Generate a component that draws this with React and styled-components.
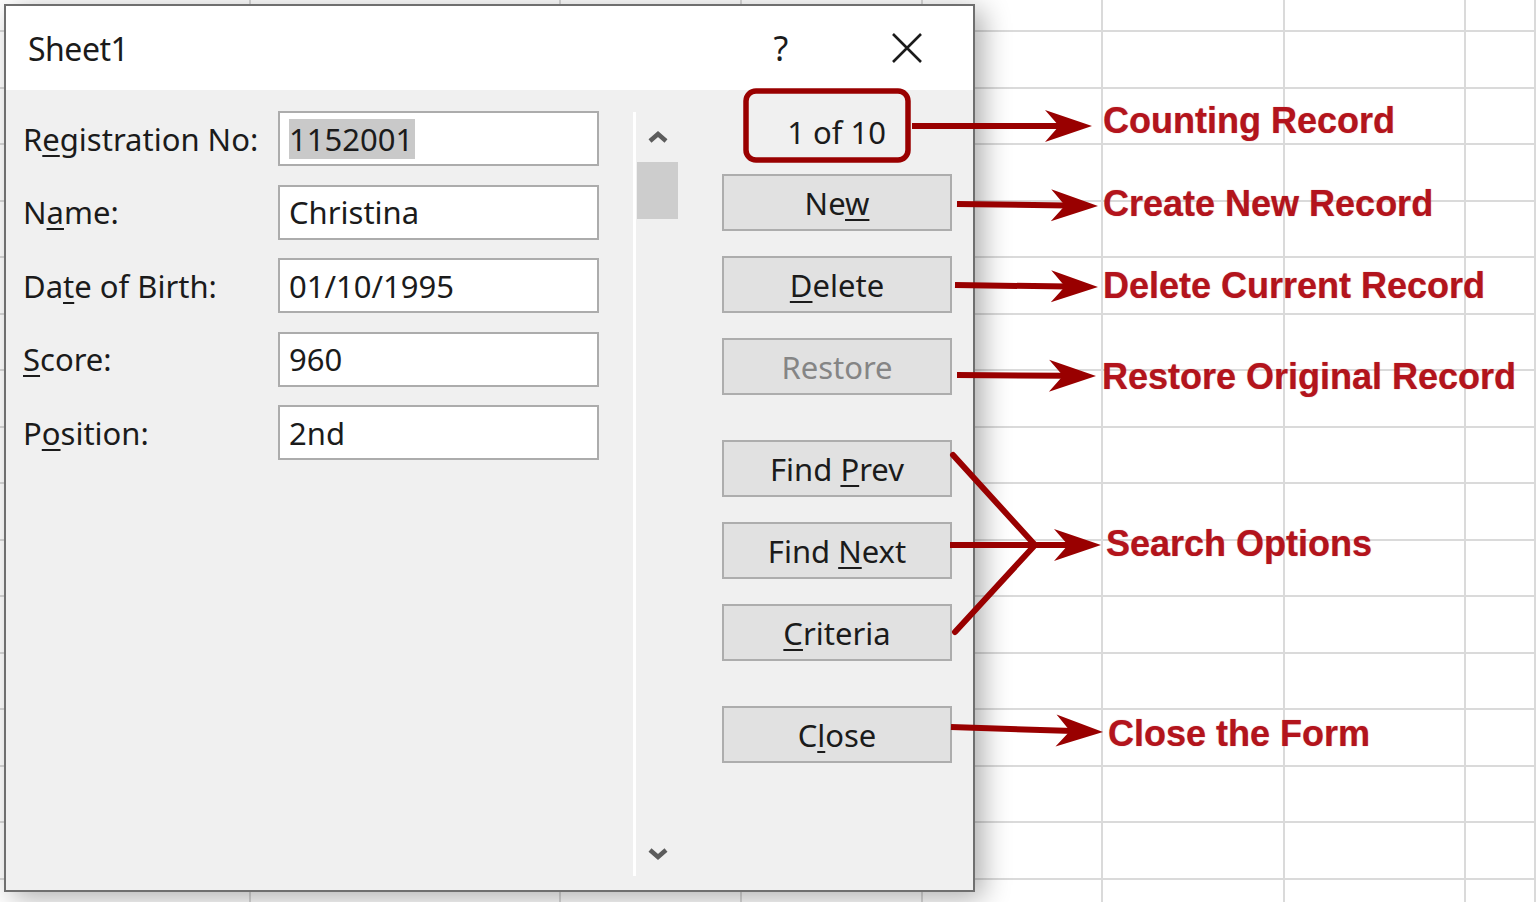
import React from 'react'
import styled, { createGlobalStyle } from 'styled-components'

const GlobalStyle = createGlobalStyle`
  html, body {
    margin: 0;
    padding: 0;
    background: #fff;
    overflow: hidden;
  }
`

const Page = styled.div`
  position: relative;
  width: 1536px;
  height: 902px;
  overflow: hidden;
  background: #fff;
  font-family: "Noto Sans", "Open Sans", sans-serif;
`

// spreadsheet behind the dialog
const Sheet = styled.div`
  display: grid;
  grid-template-columns: 251px 310px 181px 181px 180px 182px 181px 1fr;
  grid-template-rows: 32px repeat(16, 56.5px);
  width: 1536px;
  height: 902px;
`

const Cell = styled.div`
  border-right: 2px solid #dadada;
  border-bottom: 2px solid #dadada;
`

const Dialog = styled.div`
  position: absolute;
  left: 4px;
  top: 4px;
  width: 971px;
  height: 888px;
  box-sizing: border-box;
  border: 2px solid #6f6f6f;
  display: flex;
  flex-direction: column;
  background: #f0f0f0;
  box-shadow: 8px 6px 26px rgba(0, 0, 0, 0.32);
`

const TitleBar = styled.div`
  height: 84px;
  flex-shrink: 0;
  display: flex;
  align-items: center;
  background: #fff;
  padding: 0 36px 0 22px;
`

const Title = styled.div`
  flex: 1;
  font-size: 32px;
  color: #1b1b1b;
  letter-spacing: -0.5px;
`

const TitleButton = styled.div`
  width: 60px;
  height: 60px;
  display: flex;
  align-items: center;
  justify-content: center;
  font-size: 34px;
  color: #1b1b1b;
  margin-left: ${p => p.$gap || 0}px;
`

const Body = styled.div`
  flex: 1;
  display: flex;
`

const Fields = styled.div`
  display: grid;
  grid-template-columns: 255px 321px;
  grid-auto-rows: 55px;
  row-gap: 18.5px;
  align-content: start;
  padding: 21px 0 0 17px;
`

const Label = styled.div`
  display: flex;
  align-items: center;
  font-size: 31px;
  color: #1b1b1b;
  white-space: pre;
`

const AccessKey = styled.span`
  text-decoration: underline;
  text-decoration-thickness: 2px;
  text-underline-offset: 4px;
`

const TextBox = styled.div`
  box-sizing: border-box;
  border: 2px solid #acacac;
  background: #fff;
  display: flex;
  align-items: center;
  padding-left: 9px;
  font-size: 31px;
  color: #1b1b1b;
`

const Selected = styled.span`
  background: #c9c9c9;
  line-height: 40px;
  padding-right: 2px;
`

const ScrollBar = styled.div`
  margin: 22px 0 14px 34px;
  width: 43px;
  border-left: 3px solid #fff;
  display: flex;
  flex-direction: column;
`

const ScrollArrow = styled.div`
  height: ${p => p.$h}px;
  display: flex;
  align-items: center;
  justify-content: center;
`

const Thumb = styled.div`
  margin-left: 1px;
  width: 41px;
  height: 57px;
  background: #cdcdcd;
`

const Spacer = styled.div`
  flex: 1;
`

const Buttons = styled.div`
  margin-left: 43px;
  width: 230px;
  padding-top: 10px;
  display: flex;
  flex-direction: column;
`

const Counter = styled.div`
  height: 64px;
  margin-bottom: 10px;
  display: flex;
  align-items: center;
  justify-content: flex-end;
  padding-right: 66px;
  font-size: 31px;
  color: #1b1b1b;
`

const Button = styled.div`
  box-sizing: border-box;
  height: 57px;
  margin-top: ${p => (p.$first ? 0 : p.$spaced ? 45 : 25)}px;
  border: 2px solid #adadad;
  background: #e1e1e1;
  display: flex;
  align-items: center;
  justify-content: center;
  font-size: 31px;
  white-space: pre;
  color: ${p => (p.$disabled ? '#858585' : '#1b1b1b')};
`

const Overlay = styled.svg`
  position: absolute;
  left: 0;
  top: 0;
  pointer-events: none;
`

const Note = styled.div`
  position: absolute;
  font-family: "Liberation Sans", Arial, sans-serif;
  font-weight: 700;
  font-size: 36px;
  line-height: 36px;
  color: #b3141c;
  white-space: nowrap;
  text-shadow: 0 0 1px rgba(179, 20, 28, 0.6);
`

const fields = [
  { label: 'Registration No:', key: 1, value: '1152001', selected: true },
  { label: 'Name:', key: 1, value: 'Christina' },
  { label: 'Date of Birth:', key: 2, value: '01/10/1995' },
  { label: 'Score:', key: 0, value: '960' },
  { label: 'Position:', key: 1, value: '2nd' },
]

const buttons = [
  { text: 'New', key: 2 },
  { text: 'Delete', key: 0 },
  { text: 'Restore', key: -1, disabled: true },
  { text: 'Find Prev', key: 5, spaced: true },
  { text: 'Find Next', key: 5 },
  { text: 'Criteria', key: 0 },
  { text: 'Close', key: 1, spaced: true },
]

const arrows = [
  { x1: 912, y1: 126, x2: 1092, y2: 126 },
  { x1: 957, y1: 204, x2: 1098, y2: 206 },
  { x1: 955, y1: 285, x2: 1098, y2: 287 },
  { x1: 957, y1: 375, x2: 1096, y2: 376 },
  { x1: 950, y1: 545, x2: 1101, y2: 545 },
  { x1: 951, y1: 727, x2: 1103, y2: 732 },
]

const notes = [
  { text: 'Counting Record', x: 1103, y: 103 },
  { text: 'Create New Record', x: 1103, y: 186 },
  { text: 'Delete Current Record', x: 1103, y: 268 },
  { text: 'Restore Original Record', x: 1102, y: 359 },
  { text: 'Search Options', x: 1106, y: 526 },
  { text: 'Close the Form', x: 1108, y: 716 },
]

const withKey = (text, i) => {
  if (i < 0) return <span>{text}</span>
  return (
    <span>
      {text.slice(0, i)}
      <AccessKey>{text[i]}</AccessKey>
      {text.slice(i + 1)}
    </span>
  )
}

const Chevron = ({ down }) => (
  <svg width="22" height="14" viewBox="0 0 22 14">
    <polyline
      points={down ? '3,4 11,11 19,4' : '3,11 11,4 19,11'}
      fill="none"
      stroke="#5c5c5c"
      strokeWidth="4.5"
    />
  </svg>
)

const CloseIcon = () => (
  <svg width="30" height="30" viewBox="0 0 30 30">
    <path d="M1 1 L29 29 M29 1 L1 29" stroke="#1b1b1b" strokeWidth="2.6" />
  </svg>
)

const RED = '#990000'

const Arrow = ({ x1, y1, x2, y2 }) => {
  const deg = (Math.atan2(y2 - y1, x2 - x1) * 180) / Math.PI
  const len = Math.hypot(x2 - x1, y2 - y1)
  return (
    <g transform={`translate(${x1} ${y1}) rotate(${deg})`}>
      <line x1="0" y1="0" x2={len - 30} y2="0" stroke={RED} strokeWidth="6" />
      <polygon
        points={`${len},0 ${len - 47},-16 ${len - 33},0 ${len - 47},16`}
        fill={RED}
      />
    </g>
  )
}

const Annotations = () => (
  <>
    <Overlay width="1536" height="902" viewBox="0 0 1536 902">
      <rect x="746" y="91" width="162" height="69" rx="10" fill="none" stroke={RED} strokeWidth="5.5" />
      <line x1="953" y1="455" x2="1035" y2="545" stroke={RED} strokeWidth="6" strokeLinecap="round" />
      <line x1="955" y1="632" x2="1035" y2="545" stroke={RED} strokeWidth="6" strokeLinecap="round" />
      {arrows.map((a, i) => (
        <Arrow key={i} {...a} />
      ))}
    </Overlay>
    {notes.map(n => (
      <Note key={n.text} style={{ left: n.x, top: n.y }}>
        {n.text}
      </Note>
    ))}
  </>
)

const App = () => {
  const cells = Array.from({ length: 8 * 17 })
  return (
    <Page>
      <GlobalStyle />
      <Sheet>
        {cells.map((_, i) => (
          <Cell key={i} />
        ))}
      </Sheet>

      <Dialog>
        <TitleBar>
          <Title>Sheet1</Title>
          <TitleButton>?</TitleButton>
          <TitleButton $gap={66}>
            <CloseIcon />
          </TitleButton>
        </TitleBar>

        <Body>
          <Fields>
            {fields.map(f => (
              <React.Fragment key={f.label}>
                <Label>{withKey(f.label, f.key)}</Label>
                <TextBox>{f.selected ? <Selected>{f.value}</Selected> : f.value}</TextBox>
              </React.Fragment>
            ))}
          </Fields>

          <ScrollBar>
            <ScrollArrow $h={50}>
              <Chevron />
            </ScrollArrow>
            <Thumb />
            <Spacer />
            <ScrollArrow $h={46}>
              <Chevron down />
            </ScrollArrow>
          </ScrollBar>

          <Buttons>
            <Counter>1 of 10</Counter>
            {buttons.map((b, i) => (
              <Button key={b.text} $first={i === 0} $spaced={b.spaced} $disabled={b.disabled}>
                {withKey(b.text, b.key)}
              </Button>
            ))}
          </Buttons>
        </Body>
      </Dialog>

      <Annotations />
    </Page>
  )
}

export default App
